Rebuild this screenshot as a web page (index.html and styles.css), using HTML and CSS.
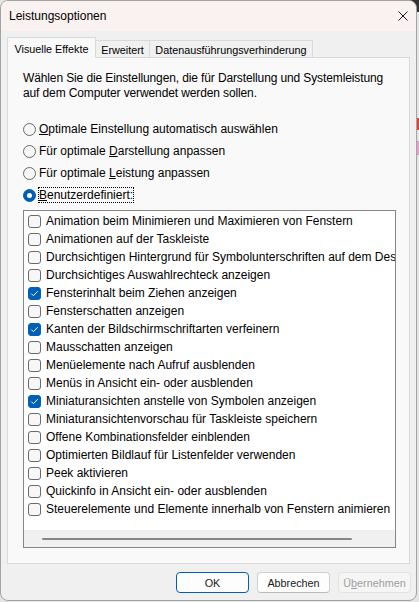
FILE: index.html
```html
<!DOCTYPE html>
<html lang="de">
<head>
<meta charset="utf-8">
<title>Leistungsoptionen</title>
<link rel="stylesheet" href="styles.css">
</head>
<body>
<div class="window">
  <header class="titlebar">
    <span class="title">Leistungsoptionen</span>
    <svg class="close" width="10" height="10" viewBox="0 0 10 10"><path d="M0.5 0.5 L9.5 9.5 M9.5 0.5 L0.5 9.5" stroke="#1a1a1a" stroke-width="1" fill="none"/></svg>
  </header>
  <main class="content">
    <div class="tabs">
      <div class="tab tab-active">Visuelle Effekte</div>
      <div class="tab tab-2">Erweitert</div>
      <div class="tab tab-3">Datenausführungsverhinderung</div>
    </div>
    <section class="panel">
      <p class="desc">Wählen Sie die Einstellungen, die für Darstellung und Systemleistung<br>auf dem Computer verwendet werden sollen.</p>
      <div class="radios">
        <div class="radio-row"><span class="radio"></span><span class="label"><u>O</u>ptimale Einstellung automatisch auswählen</span></div>
        <div class="radio-row"><span class="radio"></span><span class="label">Für optimale <u>D</u>arstellung anpassen</span></div>
        <div class="radio-row"><span class="radio"></span><span class="label">Für optimale <u>L</u>eistung anpassen</span></div>
        <div class="radio-row"><span class="radio radio-checked"></span><span class="label label-focus"><u>B</u>enutzerdefiniert:</span></div>
      </div>
      <div class="listbox">
        <div class="items">
          <div class="item"><span class="cb"></span><span>Animation beim Minimieren und Maximieren von Fenstern</span></div>
          <div class="item"><span class="cb"></span><span>Animationen auf der Taskleiste</span></div>
          <div class="item"><span class="cb"></span><span>Durchsichtigen Hintergrund für Symbolunterschriften auf dem Desktop</span></div>
          <div class="item"><span class="cb"></span><span>Durchsichtiges Auswahlrechteck anzeigen</span></div>
          <div class="item"><span class="cb cb-checked"><svg width="11" height="11" viewBox="0 0 11 11"><path d="M2.3 5.6 L4.4 7.7 L8.7 3.2" fill="none" stroke="#fff" stroke-width="1"/></svg></span><span>Fensterinhalt beim Ziehen anzeigen</span></div>
          <div class="item"><span class="cb"></span><span>Fensterschatten anzeigen</span></div>
          <div class="item"><span class="cb cb-checked"><svg width="11" height="11" viewBox="0 0 11 11"><path d="M2.3 5.6 L4.4 7.7 L8.7 3.2" fill="none" stroke="#fff" stroke-width="1"/></svg></span><span>Kanten der Bildschirmschriftarten verfeinern</span></div>
          <div class="item"><span class="cb"></span><span>Mausschatten anzeigen</span></div>
          <div class="item"><span class="cb"></span><span>Menüelemente nach Aufruf ausblenden</span></div>
          <div class="item"><span class="cb"></span><span>Menüs in Ansicht ein- oder ausblenden</span></div>
          <div class="item"><span class="cb cb-checked"><svg width="11" height="11" viewBox="0 0 11 11"><path d="M2.3 5.6 L4.4 7.7 L8.7 3.2" fill="none" stroke="#fff" stroke-width="1"/></svg></span><span>Miniaturansichten anstelle von Symbolen anzeigen</span></div>
          <div class="item"><span class="cb"></span><span>Miniaturansichtenvorschau für Taskleiste speichern</span></div>
          <div class="item"><span class="cb"></span><span>Offene Kombinationsfelder einblenden</span></div>
          <div class="item"><span class="cb"></span><span>Optimierten Bildlauf für Listenfelder verwenden</span></div>
          <div class="item"><span class="cb"></span><span>Peek aktivieren</span></div>
          <div class="item"><span class="cb"></span><span>Quickinfo in Ansicht ein- oder ausblenden</span></div>
          <div class="item"><span class="cb"></span><span>Steuerelemente und Elemente innerhalb von Fenstern animieren</span></div>
        </div>
        <div class="hscroll"><div class="thumb"></div></div>
      </div>
    </section>
    <div class="buttons">
      <button class="btn btn-default">OK</button>
      <button class="btn">Abbrechen</button>
      <button class="btn btn-disabled" disabled>Ü<u>b</u>ernehmen</button>
    </div>
  </main>
</div>
</body>
</html>
```

FILE: styles.css
```css
* { box-sizing: border-box; }
html, body { margin: 0; padding: 0; }
body {
  width: 419px;
  height: 602px;
  overflow: hidden;
  font-family: "Liberation Sans", Arial, sans-serif;
  font-size: 12px;
  color: #000;
  background:
    linear-gradient(#333, #333) right top / 12px 12px no-repeat,
    linear-gradient(#d9443e, #d9443e) right 0 top 118px / 2px 12px no-repeat,
    linear-gradient(#e3a3c4, #e3a3c4) right 0 top 141px / 2px 14px no-repeat,
    #e4e4e4;
}
.window {
  width: 417px;
  height: 601px;
  border: 1px solid #a3a3a3;
  border-radius: 8px;
  overflow: hidden;
  background: #f0f0f0;
  display: flex;
  flex-direction: column;
}
.titlebar {
  flex: none;
  height: 30px;
  background: #faf2f0;
  display: flex;
  align-items: center;
  padding: 0 8px;
}
.title { font-size: 12px; color: #000; }
.close { margin-left: auto; display: block; }

.content {
  flex: 1;
  padding: 6px 6px 0 6px;
  display: flex;
  flex-direction: column;
}
.tabs {
  display: flex;
  align-items: flex-end;
  height: 21px;
  margin-bottom: -1px;
  position: relative;
  z-index: 1;
}
.tab {
  height: 17px;
  margin-bottom: 1px;
  border: 1px solid #d9d9d9;
  border-bottom: none;
  border-left: none;
  background: #f0f0f0;
  font-size: 10.8px;
  line-height: 16px;
  padding-top: 1px;
  text-align: center;
  white-space: nowrap;
}
.tab-active {
  width: 89px;
  height: 21px;
  margin-bottom: 0;
  border-left: 1px solid #d9d9d9;
  background: #f9f9f9;
  padding-top: 3px;
}
.tab-2 { width: 54px; }
.tab-3 { width: 163px; }

.panel {
  flex: none;
  height: 507px;
  border: 1px solid #d9d9d9;
  background: #f9f9f9;
  padding: 13px 0 0 15px;
}
.desc {
  margin: 0 0 17px;
  line-height: 15px;
  letter-spacing: -0.12px;
  white-space: nowrap;
}
.radio-row {
  display: flex;
  align-items: center;
  height: 22px;
  white-space: nowrap;
}
.radio {
  flex: none;
  width: 13px;
  height: 13px;
  border-radius: 50%;
  border: 1px solid #6a6a6a;
  background: #f6f6f6;
  margin-right: 3px;
}
.radio-checked {
  background: #005fb8;
  border-color: #005fb8;
  display: flex;
  align-items: center;
  justify-content: center;
}
.radio-checked::after {
  content: "";
  width: 5px;
  height: 5px;
  border-radius: 50%;
  background: #fff;
}
.label-focus {
  display: inline-block;
  line-height: 14px;
  outline: 1px dotted #000;
}
.listbox {
  margin-top: 4px;
  width: 373px;
  height: 338px;
  border: 1px solid #868686;
  background: #fff;
  display: flex;
  flex-direction: column;
}
.items {
  flex: 1;
  overflow: hidden;
  padding-top: 1px;
}
.item {
  display: flex;
  align-items: center;
  height: 18px;
  padding-left: 4px;
  white-space: nowrap;
}
.cb {
  flex: none;
  width: 13px;
  height: 13px;
  border: 1px solid #6a6a6a;
  border-radius: 3px;
  background: #f7f7f7;
  margin-right: 5px;
}
.cb svg { display: block; }
.cb-checked {
  background: #005fb8;
  border-color: #005fb8;
}
.hscroll {
  flex: none;
  height: 17px;
  background: #f0f0f0;
  display: flex;
  align-items: center;
}
.thumb {
  margin-left: 18px;
  width: 310px;
  height: 2px;
  border-radius: 1px;
  background: #868686;
}
.buttons {
  display: flex;
  justify-content: flex-end;
  gap: 8px;
  margin-top: 8px;
  margin-right: -1px;
}
.btn {
  width: 73px;
  height: 21px;
  padding: 0;
  font-family: "Liberation Sans", Arial, sans-serif;
  font-size: 10.8px;
  color: #1a1a1a;
  background: #fdfdfd;
  border: 1px solid #d0d0d0;
  border-bottom-color: #bababa;
  border-radius: 4px;
}
.btn-default { border-color: #005fb8; }
.btn-disabled {
  background: #f5f5f5;
  border-color: #e3e3e3;
  color: #a0a0a0;
}
```
